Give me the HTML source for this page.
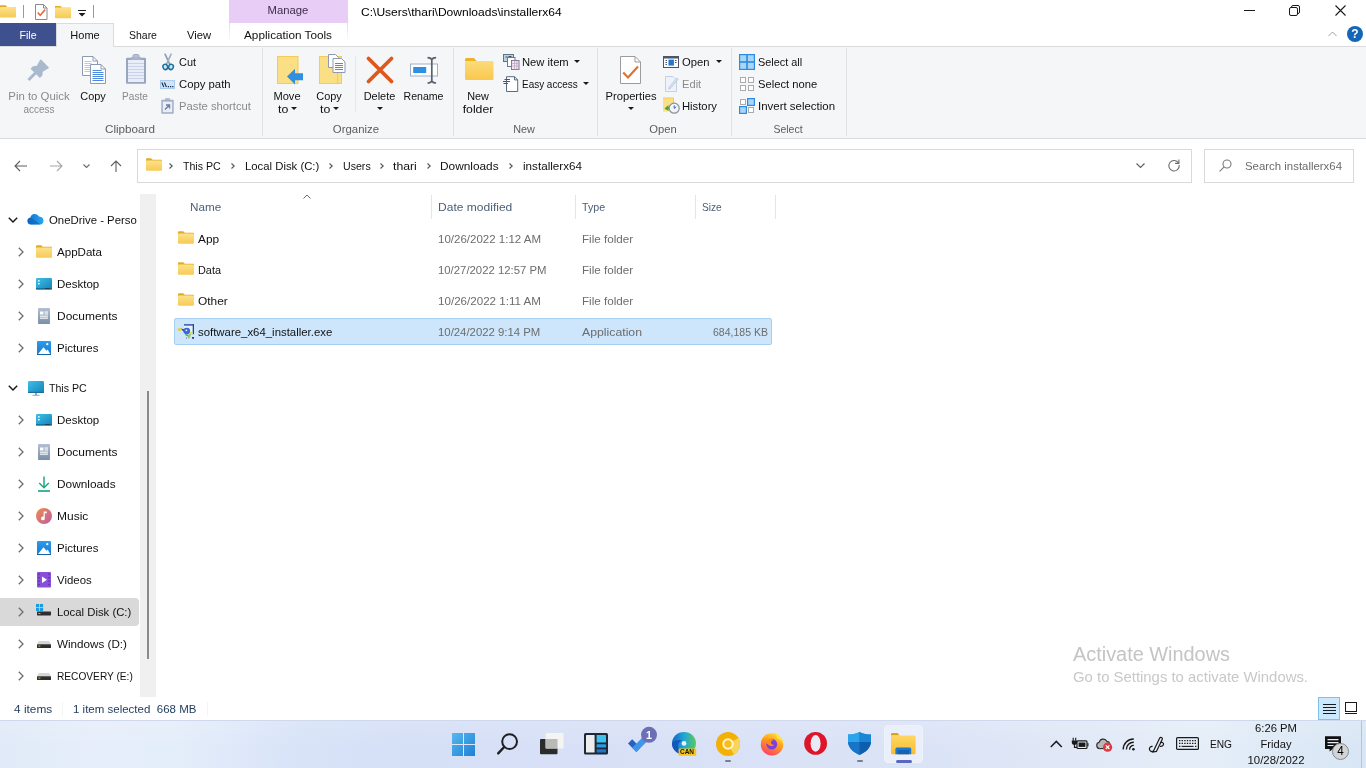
<!DOCTYPE html>
<html lang="en">
<head>
<meta charset="utf-8">
<title>installerx64</title>
<style>
*{box-sizing:border-box;margin:0;padding:0}
html,body{width:1366px;height:768px;overflow:hidden;background:#fff}
body{font-family:"Liberation Sans",sans-serif;font-size:11.75px;color:#111;position:relative}
.a{position:absolute;white-space:nowrap}
.t{position:absolute;white-space:nowrap;line-height:16px;height:16px}
.c{text-align:center}
.g{color:#5c5c5c}
.h{color:#4c607a}
.d{color:#6d6d6d}
.s{color:#1e395b}
.dis{color:#8a8a8a}
svg{position:absolute;overflow:visible}
/* title / tabs */
#manage{left:229px;top:0;width:119px;height:23px;background:#e8cdf7}
#filetab{left:0;top:23px;width:56px;height:23px;background:#3e508e}
#hometab{left:56px;top:23px;width:58px;height:24px;background:#f5f6f7;border:1px solid #dadbdc;border-bottom:none}
#apptab{left:229px;top:23px;width:119px;height:18px;background:linear-gradient(#ead4f5,#fff) left/1px 100% no-repeat,linear-gradient(#ead4f5,#fff) right/1px 100% no-repeat}
#ribbon{left:0;top:46px;width:1366px;height:93px;background:#f5f6f7;border-top:1px solid #dadbdc;border-bottom:1px solid #dadbdc}
.sep{position:absolute;top:48px;width:1px;height:88px;background:#e1e2e3}
/* address */
#addr{left:137px;top:149px;width:1055px;height:34px;border:1px solid #d9d9d9;background:#fff}
#search{left:1204px;top:149px;width:150px;height:34px;border:1px solid #d9d9d9;background:#fff}
/* nav */
#navsel{left:0;top:598px;width:139px;height:28px;background:#d9d9d9;border-radius:0 4px 4px 0}
#sbtrack{left:140px;top:194px;width:16px;height:503px;background:#f0f0f0}
#sbthumb{left:147px;top:391px;width:2px;height:268px;background:#8a8a8a}
/* list */
#rowsel{left:174px;top:318px;width:598px;height:27px;background:#cde6fb;border:1px solid #a6cff2;border-radius:2px}
.hsep{position:absolute;top:195px;width:1px;height:24px;background:#e5e5e5}
/* status + taskbar */
#taskbar{left:0;top:720px;width:1366px;height:48px;border-top:1px solid #cfd8ec;background:linear-gradient(rgba(255,255,255,0.12),rgba(255,255,255,0) 60%),linear-gradient(90deg,#e0eaf8 0%,#e6eefa 7%,#e4edfa 13%,#d8e3f8 22%,#d5dff6 30%,#d9e1f6 50%,#dbe3f6 68%,#e1e9f7 80%,#e5eef8 88%,#dde9f6 95%,#d8e6f5 100%)}
</style>
</head>
<body>
<div id="w" style="position:absolute;left:0;top:0;width:1366px;height:768px;will-change:transform">
<!-- TITLE BAR -->
<div class="a" id="manage"></div>
<div class="t c" style="left:229px;top:2px;width:118px;color:#3c2d48;transform:scaleX(0.9607);transform-origin:center center">Manage</div>
<div class="t" style="left:361px;top:4px;color:#000;transform:scaleX(1.0244);transform-origin:left center">C:\Users\thari\Downloads\installerx64</div>

<!-- TABS -->
<div class="a" id="ribbon"></div>
<div class="a" id="filetab"></div>
<div class="a" id="hometab"></div>
<div class="a" id="apptab"></div>
<div class="t c" style="left:0;top:27px;width:56px;color:#fff;transform:scaleX(0.9030);transform-origin:center center">File</div>
<div class="t c" style="left:56px;top:27px;width:58px;transform:scaleX(0.9380);transform-origin:center center">Home</div>
<div class="t c" style="left:114px;top:27px;width:58px;transform:scaleX(0.8897);transform-origin:center center">Share</div>
<div class="t c" style="left:172px;top:27px;width:54px;transform:scaleX(0.9539);transform-origin:center center">View</div>
<div class="t c" style="left:229px;top:27px;width:118px;transform:scaleX(1.0004);transform-origin:center center">Application Tools</div>

<!-- RIBBON -->
<div class="sep" style="left:262px"></div>
<div class="sep" style="left:453px"></div>
<div class="sep" style="left:597px"></div>
<div class="sep" style="left:731px"></div>
<div class="sep" style="left:846px"></div>


<!-- Quick access toolbar icons -->
<svg style="left:0;top:4px" width="17" height="14" viewBox="0 0 17 14"><defs><linearGradient id="fg" x1="0" y1="0" x2="0" y2="1"><stop offset="0" stop-color="#fde18c"/><stop offset="1" stop-color="#f7ca52"/></linearGradient></defs><path d="M0 1.2h5.5l1.8 1.8H16v1H0z" fill="#e2ad24"/><rect x="0" y="3" width="16" height="10.5" rx="0.8" fill="url(#fg)"/></svg>
<div class="a" style="left:23px;top:5px;width:1px;height:13px;background:#9a9a9a"></div>
<svg style="left:35px;top:4px" width="13" height="16" viewBox="0 0 13 16"><path d="M0.5 0.5h8l3.5 3.5v11.5h-11.5z" fill="#fff" stroke="#8a8a8a"/><path d="M8.5 0.5v3.5h3.5" fill="none" stroke="#8a8a8a"/><path d="M2.8 8.6l2.4 2.6l5-5.6" fill="none" stroke="#e2703a" stroke-width="1.6"/></svg>
<svg style="left:55px;top:5px" width="17" height="14" viewBox="0 0 17 14"><path d="M0 1h5.5l1.8 1.8H16v1H0z" fill="#e2ad24"/><rect x="0" y="2.6" width="16" height="10.6" rx="0.8" fill="url(#fg)"/></svg>
<div class="a" style="left:78px;top:10px;width:8px;height:1px;background:#1a1a1a"></div>
<svg style="left:78px;top:13px" width="8" height="4" viewBox="0 0 8 4"><path d="M0.5 0h7L4 3.6z" fill="#1a1a1a"/></svg>
<div class="a" style="left:93px;top:5px;width:1px;height:13px;background:#9a9a9a"></div>

<!-- window controls -->
<div class="a" style="left:1244px;top:10px;width:11px;height:1px;background:#1a1a1a"></div>
<svg style="left:1289px;top:5px" width="11" height="11" viewBox="0 0 11 11"><rect x="0.5" y="2.5" width="8" height="8" rx="1.5" fill="none" stroke="#1a1a1a"/><path d="M2.5 2.5v-0.5a1.5 1.5 0 0 1 1.5-1.5h5a1.5 1.5 0 0 1 1.5 1.5v5a1.5 1.5 0 0 1-1.5 1.5h-0.5" fill="none" stroke="#1a1a1a"/></svg>
<svg style="left:1335px;top:5px" width="11" height="11" viewBox="0 0 11 11"><path d="M0.5 0.5l10 10M10.5 0.5l-10 10" stroke="#1a1a1a" stroke-width="1.1" fill="none"/></svg>
<svg style="left:1328px;top:31px" width="9" height="6" viewBox="0 0 9 6"><path d="M0.5 5l4-4l4 4" fill="none" stroke="#a0a0a0" stroke-width="1"/></svg>
<div class="a" style="left:1347px;top:26px;width:16px;height:16px;border-radius:8px;background:#1566b7"></div>
<div class="t c" style="left:1347px;top:26px;width:16px;color:#fff;font-weight:bold;font-size:12px">?</div>


<!-- ribbon icons -->
<svg style="left:20px;top:52px" width="40" height="36" viewBox="20 52 40 36"><path transform="translate(44.750 63.750) rotate(45)" d="M-6 0.500a0.800 0.800 0 0 1 0.800-0.800h10.400a0.800 0.800 0 0 1 0.800 0.800L4.200 7L6.600 10v3.500h-5.100V23h-3V13.500h-5.100V10L-4.200 7z" fill="#a9b9ce"/></svg>
<svg style="left:82px;top:56px" width="24" height="28" viewBox="0 0 24 28"><path d="M0.500 0.500h10.500l4.500 4.500v14.500h-15z" fill="#fff" stroke="#8c9bb3"/><path d="M11 0.500v4.500h4.500" fill="none" stroke="#8c9bb3"/><path d="M2.500 5.500h7M2.500 7.500h7M2.500 9.500h5.500M2.500 11.500h5.500M2.500 13.500h5.500M2.500 15.500h5.500" stroke="#b3cbee" stroke-width="1"/><path d="M8.500 8.500h10.500l4.500 4.500v14.500h-15z" fill="#fff" stroke="#8c9bb3"/><path d="M19 8.500v4.500h4.500" fill="none" stroke="#8c9bb3"/><path d="M10.500 14.500h9M10.500 16.500h11M10.500 18.500h11M10.500 20.500h11M10.500 22.500h11M10.500 24.500h11" stroke="#4d8add" stroke-width="1.100"/></svg>
<svg style="left:126px;top:54px" width="20" height="30" viewBox="0 0 20 30"><rect x="7" y="0.500" width="6" height="5" rx="1.500" fill="#b9c1d4" stroke="#9aa5bf"/><rect x="0" y="3.800" width="20" height="26" rx="1" fill="#9aa5bf"/><rect x="2" y="6" width="16" height="22" fill="#e9edf8"/><path d="M2 9.500h16M2 12.500h16M2 15.500h16M2 18.500h16M2 21.500h16M2 24.500h16" stroke="#c9d2e8" stroke-width="1"/><rect x="5" y="3" width="10" height="3" fill="#aab3ca"/></svg>
<svg style="left:162px;top:53px" width="13" height="18" viewBox="162 53 13 18"><path d="M164 53.800l1.700-0.300L170.600 64l-1.600 0.800z" fill="#8e9db4"/><path d="M172.200 53.800l-1.700-0.300L165.600 64l1.600 0.800z" fill="#a3b0c4"/><ellipse cx="165.300" cy="66.900" rx="2.300" ry="2.700" transform="rotate(-20 165.300 66.900)" fill="#cfe6f3" stroke="#1b6f9e" stroke-width="1.500"/><ellipse cx="171" cy="66.900" rx="2.300" ry="2.700" transform="rotate(20 171 66.900)" fill="#cfe6f3" stroke="#1b6f9e" stroke-width="1.500"/></svg>
<svg style="left:160px;top:80px" width="15" height="9" viewBox="0 0 15 9"><rect x="0.500" y="0.500" width="14" height="8" fill="#cfe4f9" stroke="#a9cbee"/><path d="M1.800 2.500l2 4.500M4.400 2.500l2 4.500" stroke="#1c2c44" stroke-width="1.100"/><path d="M7.800 6.600h1.200M10 6.600h1.200M12.200 6.600h1.200" stroke="#1c2c44" stroke-width="1.200"/></svg>
<svg style="left:161px;top:98px" width="13" height="16" viewBox="0 0 13 16"><rect x="4" y="0" width="5" height="3" rx="1" fill="#b4bdd2"/><rect x="0.300" y="1.800" width="12.400" height="14" rx="0.800" fill="#a3aec6"/><rect x="1.800" y="3.600" width="9.400" height="10.600" fill="#e9edf8"/><path d="M4 11.500l4.200-4.200M5 7h3.500v3.500" fill="none" stroke="#6f7e9c" stroke-width="1.400"/></svg>

<svg style="left:277px;top:56px" width="27" height="29" viewBox="0 0 27 29"><rect x="0.500" y="0.500" width="20.500" height="27" fill="#fbdf85" stroke="#f1cb5c"/><path d="M10 20.500L18 12.800v4.400h8v7H18v4.400z" fill="#2f8fe2"/></svg>
<svg style="left:319px;top:54px" width="27" height="30" viewBox="0 0 27 30"><rect x="0.500" y="2.500" width="22" height="27" fill="#fbdf85" stroke="#f1cb5c"/><rect x="18" y="18" width="1.200" height="11.500" fill="#f1cb5c"/><path d="M9.500 0.500h7l3 3v10h-10z" fill="#fff" stroke="#8c9bb3"/><path d="M14 4.500h8.500l3.500 3.500v10.500h-12z" fill="#fff" stroke="#8c9bb3"/><path d="M16 9.500h8M16 11.500h8M16 13.500h8M16 15.500h8" stroke="#4d8add" stroke-width="1"/></svg>
<svg style="left:366px;top:56px" width="28" height="28" viewBox="0 0 28 28"><path d="M2.500 2.500L25.500 25.500M25.500 2.500L2.500 25.500" stroke="#de581c" stroke-width="3.800" stroke-linecap="round"/></svg>
<svg style="left:410px;top:57px" width="28" height="27" viewBox="0 0 28 27"><rect x="0.500" y="7" width="27" height="12" fill="#fff" stroke="#9fb0c8"/><rect x="3.200" y="10" width="13" height="6" fill="#2f8fe2"/><path d="M17.500 0.600c2.500 0 3.700 0.800 4.300 2c0.600-1.200 1.800-2 4.300-2M17.500 26c2.500 0 3.700-0.800 4.300-2c0.600 1.200 1.800 2 4.300 2M21.800 2.600v21.400" fill="none" stroke="#59636f" stroke-width="1.700"/></svg>

<svg style="left:465px;top:58px" width="29" height="22" viewBox="0 0 29 22"><path d="M0 1.500a1.500 1.500 0 0 1 1.500-1.500h7.500l2.600 3H0z" fill="#ecb322"/><rect x="0" y="3" width="28.500" height="19" rx="1.200" fill="url(#gnf)"/></svg>
<svg style="left:503px;top:54px" width="17" height="16" viewBox="503 54 17 16"><rect x="503.500" y="54.500" width="10" height="7" fill="#bcd2e4" stroke="#5f7389"/><path d="M505.500 57h2M508.500 56.500h3" stroke="#3f5268" stroke-width="1"/><rect x="507.500" y="57.500" width="7.500" height="9" fill="#fff" stroke="#6b7a90"/><rect x="511.500" y="60.500" width="7.500" height="9" fill="#f3e6f0" stroke="#7f7d9a"/><path d="M512 63.500h7M512 66h7M514.500 61v8.500M516.800 61v8.500" stroke="#c3a9c6" stroke-width="0.800"/></svg>
<svg style="left:503px;top:76px" width="16" height="16" viewBox="503 76 16 16"><path d="M506.500 76.700h8l3.200 3.200v11.600h-11.200z" fill="#fff" stroke="#5b6981"/><path d="M514.500 76.700v3.200h3.200" fill="none" stroke="#5b6981"/><path d="M504.500 79.500h5.500M503 81.500h7M503.500 83.500h4.500" stroke="#46587a" stroke-width="1"/></svg>

<svg style="left:620px;top:56px" width="21" height="28" viewBox="0 0 21 28"><path d="M0.500 0.500h14.500l5.500 5.500v21.500h-20z" fill="#fff" stroke="#9c9c9c"/><path d="M15 0.500v5.500h5.500" fill="none" stroke="#9c9c9c"/><path d="M3.200 16.600l4.800 4.900l10-11" fill="none" stroke="#e2702e" stroke-width="2.200"/></svg>
<svg style="left:663px;top:56px" width="16" height="12" viewBox="0 0 16 12"><rect x="0.500" y="0.500" width="15" height="11" fill="#fff" stroke="#4c5668"/><rect x="0.500" y="0.500" width="15" height="2" fill="#4c5668"/><rect x="5.500" y="3.600" width="5.400" height="6" fill="#1f79d2"/><path d="M2.500 4.500h1.500M2.500 6.500h1.500M2.500 8.500h1.500M12 4.500h1.500M12 6.500h1.500" stroke="#4c5668" stroke-width="1"/></svg>
<svg style="left:665px;top:76px" width="14" height="16" viewBox="0 0 14 16"><path d="M0.500 0.500h7.500l3.500 3.500v11.500h-11z" fill="#eef2fa" stroke="#c6d0e4"/><path d="M13.200 3.200L5.500 12.500l-1.800 0.600l0.400-1.900L11.800 2z" fill="#d9e1f0" stroke="#b9c5dc" stroke-width="0.800"/></svg>
<svg style="left:663px;top:98px" width="17" height="16" viewBox="0 0 17 16"><rect x="0" y="0" width="10.500" height="13.500" fill="#fbdf85"/><path d="M0 0h10.500v13.500" fill="none" stroke="#f1cb5c" stroke-width="1"/><path d="M1.500 10.500l4-3.500v2.200c2 0 3 1 3.500 2.500c-1-0.800-2-1-3.500-1v2.300z" fill="#3aa83a"/><circle cx="11.200" cy="10.200" r="5" fill="#f2f4f8" stroke="#8a8f98" stroke-width="1.200"/><path d="M11.200 7.400v3l2-1.600" fill="none" stroke="#3a5fc0" stroke-width="1"/></svg>

<svg style="left:739px;top:54px" width="16" height="16" viewBox="0 0 16 16"><rect x="0" y="0" width="16" height="16" fill="#2b8be0"/><rect x="1.200" y="1.200" width="6" height="6" fill="#a9d5f9"/><rect x="8.800" y="1.200" width="6" height="6" fill="#a9d5f9"/><rect x="1.200" y="8.800" width="6" height="6" fill="#a9d5f9"/><rect x="8.800" y="8.800" width="6" height="6" fill="#a9d5f9"/></svg>
<svg style="left:740px;top:77px" width="14" height="14" viewBox="0 0 14 14"><g fill="#fff" stroke="#ababab" stroke-width="1"><rect x="0.500" y="0.500" width="5" height="5"/><rect x="8.500" y="0.500" width="5" height="5"/><rect x="0.500" y="8.500" width="5" height="5"/><rect x="8.500" y="8.500" width="5" height="5"/></g></svg>
<svg style="left:739px;top:98px" width="16" height="16" viewBox="0 0 16 16"><rect x="1.500" y="1.500" width="5" height="5" fill="#fff" stroke="#ababab"/><rect x="9.500" y="9.500" width="5" height="5" fill="#fff" stroke="#ababab"/><rect x="8" y="0" width="8" height="8" fill="#2b8be0"/><rect x="9.200" y="1.200" width="5.600" height="5.600" fill="#a9d5f9"/><rect x="0" y="8" width="8" height="8" fill="#2b8be0"/><rect x="1.200" y="9.200" width="5.600" height="5.600" fill="#a9d5f9"/></svg>

<!-- Clipboard group -->
<div class="t c dis" style="left:0;top:88px;width:78px;transform:scaleX(0.9691);transform-origin:center center">Pin to Quick</div>
<div class="t c dis" style="left:0;top:101px;width:78px;transform:scaleX(0.8448);transform-origin:center center">access</div>
<div class="t c" style="left:73px;top:88px;width:40px;transform:scaleX(0.9294);transform-origin:center center">Copy</div>
<div class="t c dis" style="left:115px;top:88px;width:40px;transform:scaleX(0.8587);transform-origin:center center">Paste</div>
<div class="t" style="left:179px;top:54px;transform:scaleX(0.9291);transform-origin:left center">Cut</div>
<div class="t" style="left:179px;top:76px;transform:scaleX(0.9631);transform-origin:left center">Copy path</div>
<div class="t dis" style="left:179px;top:98px;transform:scaleX(0.9586);transform-origin:left center">Paste shortcut</div>
<div class="t c g" style="left:90px;top:121px;width:80px;transform:scaleX(0.9941);transform-origin:center center">Clipboard</div>

<!-- Organize group -->
<div class="t c" style="left:267px;top:88px;width:40px;transform:scaleX(0.9466);transform-origin:center center">Move</div>
<div class="t" style="left:278px;top:101px;transform:scaleX(1.0497);transform-origin:left center">to</div>
<div class="t c" style="left:309px;top:88px;width:40px;transform:scaleX(0.9294);transform-origin:center center">Copy</div>
<div class="t" style="left:320px;top:101px;transform:scaleX(1.0497);transform-origin:left center">to</div>
<div class="a" style="left:355px;top:56px;width:1px;height:56px;background:#e6e7e8"></div>
<div class="t c" style="left:359px;top:88px;width:41px;transform:scaleX(0.9303);transform-origin:center center">Delete</div>
<div class="t c" style="left:401px;top:88px;width:45px;transform:scaleX(0.9005);transform-origin:center center">Rename</div>
<div class="t c g" style="left:316px;top:121px;width:80px;transform:scaleX(0.9730);transform-origin:center center">Organize</div>

<!-- New group -->
<div class="t c" style="left:458px;top:88px;width:40px;transform:scaleX(0.9228);transform-origin:center center">New</div>
<div class="t c" style="left:458px;top:101px;width:40px;transform:scaleX(1.0440);transform-origin:center center">folder</div>
<div class="t" style="left:522px;top:54px;transform:scaleX(0.9537);transform-origin:left center">New item</div>
<div class="t" style="left:522px;top:76px;transform:scaleX(0.8459);transform-origin:left center">Easy access</div>
<div class="t c g" style="left:484px;top:121px;width:80px;transform:scaleX(0.9228);transform-origin:center center">New</div>

<!-- Open group -->
<div class="t c" style="left:600px;top:88px;width:62px;transform:scaleX(0.9522);transform-origin:center center">Properties</div>
<div class="t" style="left:682px;top:54px;transform:scaleX(0.9565);transform-origin:left center">Open</div>
<div class="t dis" style="left:682px;top:76px;transform:scaleX(0.9481);transform-origin:left center">Edit</div>
<div class="t" style="left:682px;top:98px;transform:scaleX(0.9573);transform-origin:left center">History</div>
<div class="t c g" style="left:623px;top:121px;width:80px;transform:scaleX(0.9565);transform-origin:center center">Open</div>

<!-- Select group -->
<div class="t" style="left:758px;top:54px;transform:scaleX(0.9269);transform-origin:left center">Select all</div>
<div class="t" style="left:758px;top:76px;transform:scaleX(0.9539);transform-origin:left center">Select none</div>
<div class="t" style="left:758px;top:98px;transform:scaleX(0.9743);transform-origin:left center">Invert selection</div>
<div class="t c g" style="left:748px;top:121px;width:80px;transform:scaleX(0.8937);transform-origin:center center">Select</div>

<!-- dropdown arrows -->
<svg class="arr" style="left:291px;top:107px" width="6" height="3" viewBox="0 0 6 3"><path d="M0 0h6L3 3z" fill="#1a1a1a"/></svg>
<svg class="arr" style="left:333px;top:107px" width="6" height="3" viewBox="0 0 6 3"><path d="M0 0h6L3 3z" fill="#1a1a1a"/></svg>
<svg class="arr" style="left:377px;top:107px" width="6" height="3" viewBox="0 0 6 3"><path d="M0 0h6L3 3z" fill="#1a1a1a"/></svg>
<svg class="arr" style="left:628px;top:107px" width="6" height="3" viewBox="0 0 6 3"><path d="M0 0h6L3 3z" fill="#1a1a1a"/></svg>
<svg class="arr" style="left:574px;top:60px" width="6" height="3" viewBox="0 0 6 3"><path d="M0 0h6L3 3z" fill="#1a1a1a"/></svg>
<svg class="arr" style="left:583px;top:82px" width="6" height="3" viewBox="0 0 6 3"><path d="M0 0h6L3 3z" fill="#1a1a1a"/></svg>
<svg class="arr" style="left:716px;top:60px" width="6" height="3" viewBox="0 0 6 3"><path d="M0 0h6L3 3z" fill="#1a1a1a"/></svg>

<!-- ADDRESS BAR -->
<div class="a" id="addr"></div>
<div class="a" id="search"></div>


<!-- nav arrows -->
<svg style="left:14px;top:160px" width="14" height="12" viewBox="0 0 14 12"><path d="M13 6H1M6 1L1 6l5 5" fill="none" stroke="#5f5f5f" stroke-width="1.1"/></svg>
<svg style="left:49px;top:160px" width="14" height="12" viewBox="0 0 14 12"><path d="M1 6h12M8 1l5 5l-5 5" fill="none" stroke="#a6a6a6" stroke-width="1.1"/></svg>
<svg style="left:83px;top:164px" width="7" height="4" viewBox="0 0 7 4"><path d="M0.5 0.5l3 3l3-3" fill="none" stroke="#6a6a6a" stroke-width="1.1"/></svg>
<svg style="left:110px;top:160px" width="12" height="12" viewBox="0 0 12 12"><path d="M6 12V1M1 6l5-5l5 5" fill="none" stroke="#5f5f5f" stroke-width="1.1"/></svg>
<svg style="left:146px;top:158px" width="16" height="13" viewBox="0 0 16 13"><path d="M0 1.2a1 1 0 0 1 1-1h4l1.6 1.6H15a1 1 0 0 1 1 1V4H0z" fill="#e2ad24"/><rect x="0" y="2.6" width="16" height="10.2" rx="1" fill="url(#fg)"/></svg>
<div class="t" style="left:183px;top:158px;transform:scaleX(0.9020);transform-origin:left center">This PC</div>
<div class="t" style="left:245px;top:158px;transform:scaleX(0.9643);transform-origin:left center">Local Disk (C:)</div>
<div class="t" style="left:343px;top:158px;transform:scaleX(0.9026);transform-origin:left center">Users</div>
<div class="t" style="left:393px;top:158px;transform:scaleX(1.0411);transform-origin:left center">thari</div>
<div class="t" style="left:440px;top:158px;transform:scaleX(1.0079);transform-origin:left center">Downloads</div>
<div class="t" style="left:523px;top:158px;transform:scaleX(0.9926);transform-origin:left center">installerx64</div>
<svg class="chv" style="left:169px;top:163px" width="4" height="6" viewBox="0 0 4 6"><path d="M0.5 0.5L3.2 3L0.5 5.5" fill="none" stroke="#555" stroke-width="1.1"/></svg>
<svg class="chv" style="left:231px;top:163px" width="4" height="6" viewBox="0 0 4 6"><path d="M0.5 0.5L3.2 3L0.5 5.5" fill="none" stroke="#555" stroke-width="1.1"/></svg>
<svg class="chv" style="left:329px;top:163px" width="4" height="6" viewBox="0 0 4 6"><path d="M0.5 0.5L3.2 3L0.5 5.5" fill="none" stroke="#555" stroke-width="1.1"/></svg>
<svg class="chv" style="left:380px;top:163px" width="4" height="6" viewBox="0 0 4 6"><path d="M0.5 0.5L3.2 3L0.5 5.5" fill="none" stroke="#555" stroke-width="1.1"/></svg>
<svg class="chv" style="left:427px;top:163px" width="4" height="6" viewBox="0 0 4 6"><path d="M0.5 0.5L3.2 3L0.5 5.5" fill="none" stroke="#555" stroke-width="1.1"/></svg>
<svg class="chv" style="left:509px;top:163px" width="4" height="6" viewBox="0 0 4 6"><path d="M0.5 0.5L3.2 3L0.5 5.5" fill="none" stroke="#555" stroke-width="1.1"/></svg>
<svg style="left:1136px;top:163px" width="9" height="5" viewBox="0 0 9 5"><path d="M0.5 0.5l4 4l4-4" fill="none" stroke="#5f5f5f" stroke-width="1.1"/></svg>
<svg style="left:1168px;top:159px" width="12" height="12" viewBox="0 0 12 12"><path d="M10.6 4.2A5.2 5.2 0 1 0 11.2 6" fill="none" stroke="#6a6a6a" stroke-width="1.1"/><path d="M10.9 0.6v3.8h-3.8" fill="none" stroke="#6a6a6a" stroke-width="1.1"/></svg>
<svg style="left:1219px;top:159px" width="13" height="13" viewBox="0 0 13 13"><circle cx="8" cy="5" r="4" fill="none" stroke="#7a7a7a" stroke-width="1.1"/><path d="M5.2 7.8L0.6 12.4" stroke="#7a7a7a" stroke-width="1.1"/></svg>
<div class="t g" style="left:1245px;top:158px;color:#6a6a6a;transform:scaleX(0.9706);transform-origin:left center">Search installerx64</div>

<!-- NAV PANE -->
<div class="a" id="sbtrack"></div>
<div class="a" id="sbthumb"></div>
<div class="a" id="navsel"></div>

<svg width="0" height="0" style="left:0;top:0"><defs>
<linearGradient id="gdesk" x1="0" y1="0" x2="1" y2="1"><stop offset="0" stop-color="#3cc0ea"/><stop offset="1" stop-color="#1682b8"/></linearGradient>
<linearGradient id="gdoc" x1="0" y1="0" x2="0" y2="1"><stop offset="0" stop-color="#b3c0d3"/><stop offset="1" stop-color="#7a8ea9"/></linearGradient>
<linearGradient id="gpic" x1="0" y1="0" x2="0" y2="1"><stop offset="0" stop-color="#2a9cee"/><stop offset="1" stop-color="#1a78cf"/></linearGradient>
<linearGradient id="gmus" x1="0" y1="0" x2="1" y2="1"><stop offset="0" stop-color="#f08c4a"/><stop offset="1" stop-color="#bd5ca6"/></linearGradient>
<linearGradient id="gcloud" x1="0" y1="0" x2="1" y2="0"><stop offset="0" stop-color="#0f6fd0"/><stop offset="1" stop-color="#2aa6ec"/></linearGradient>
<linearGradient id="gdrv" x1="0" y1="0" x2="0" y2="1"><stop offset="0" stop-color="#dcdcdc"/><stop offset="0.45" stop-color="#9a9a9a"/><stop offset="0.5" stop-color="#3a3a3a"/><stop offset="1" stop-color="#2a2a2a"/></linearGradient>
</defs></svg>
<svg style="left:8px;top:217px" width="10" height="6" viewBox="0 0 10 6"><path d="M0.8 0.8L5 5L9.2 0.8" fill="none" stroke="#1a1a1a" stroke-width="1.5"/></svg>
<svg style="left:27px;top:214px" width="17" height="11" viewBox="0 0 17 11"><path d="M4 10.5a3.5 3.5 0 0 1-0.6-6.95A4.6 4.6 0 0 1 12 2.6a3.1 3.1 0 0 1 1.2 0.2A3.9 3.9 0 0 1 13.2 10.5z" fill="url(#gcloud)"/><path d="M4 10.5a3.5 3.5 0 0 1-1.2-6.8c2 0.2 6 2.8 10.4 6.8z" fill="#0b5cb8" opacity="0.55"/></svg>
<div class="t" style="left:49px;top:212px;transform:scaleX(0.9673);transform-origin:left center">OneDrive - Perso</div>
<svg style="left:18px;top:247px" width="6" height="10" viewBox="0 0 6 10"><path d="M0.8 0.8L5 5L0.8 9.2" fill="none" stroke="#6e6e6e" stroke-width="1.3"/></svg>
<svg style="left:36px;top:245px" width="16" height="13" viewBox="0 0 16 13"><path d="M0 1.2a1 1 0 0 1 1-1h4.2l1.6 1.6H15a1 1 0 0 1 1 1V4H0z" fill="#e2ad24"/><rect x="0" y="2.6" width="16" height="10.2" rx="1" fill="url(#fg)"/></svg>
<div class="t" style="left:57px;top:244px;transform:scaleX(0.9839);transform-origin:left center">AppData</div>
<svg style="left:18px;top:279px" width="6" height="10" viewBox="0 0 6 10"><path d="M0.8 0.8L5 5L0.8 9.2" fill="none" stroke="#6e6e6e" stroke-width="1.3"/></svg>
<svg style="left:36px;top:278px" width="16" height="12" viewBox="0 0 16 12"><rect x="0" y="0" width="16" height="11.5" rx="1.2" fill="url(#gdesk)"/><rect x="2" y="2.2" width="1.6" height="1.4" fill="#fff"/><rect x="2" y="5" width="1.6" height="1.4" fill="#fff"/><rect x="0" y="10" width="16" height="1.5" fill="#13709f"/><rect x="9" y="10" width="5" height="1" fill="#2b3d4a"/></svg>
<div class="t" style="left:57px;top:276px;transform:scaleX(0.9789);transform-origin:left center">Desktop</div>
<svg style="left:18px;top:311px" width="6" height="10" viewBox="0 0 6 10"><path d="M0.8 0.8L5 5L0.8 9.2" fill="none" stroke="#6e6e6e" stroke-width="1.3"/></svg>
<svg style="left:38px;top:308px" width="12" height="16" viewBox="0 0 12 16"><rect x="0" y="0" width="12" height="16" rx="0.8" fill="url(#gdoc)"/><rect x="2" y="3.5" width="3.5" height="3" fill="#fff"/><rect x="6.5" y="3.5" width="3.5" height="1.1" fill="#fff"/><rect x="6.5" y="5.4" width="3.5" height="1.1" fill="#fff"/><rect x="2" y="7.6" width="8" height="1.1" fill="#fff"/><rect x="2" y="9.6" width="8" height="1.1" fill="#fff"/></svg>
<div class="t" style="left:57px;top:308px;transform:scaleX(1.0179);transform-origin:left center">Documents</div>
<svg style="left:18px;top:343px" width="6" height="10" viewBox="0 0 6 10"><path d="M0.8 0.8L5 5L0.8 9.2" fill="none" stroke="#6e6e6e" stroke-width="1.3"/></svg>
<svg style="left:37px;top:341px" width="14" height="14" viewBox="0 0 14 14"><rect x="0" y="0" width="14" height="14" rx="1" fill="url(#gpic)"/><path d="M0.8 13.2L6.5 6.2l3 3.6l1.2-1.2l2.6 4.6z" fill="#fff"/><circle cx="10.3" cy="3.2" r="1.1" fill="#fff"/><rect x="0" y="13" width="14" height="1" fill="#1560a8"/></svg>
<div class="t" style="left:57px;top:340px;transform:scaleX(0.9775);transform-origin:left center">Pictures</div>
<svg style="left:8px;top:385px" width="10" height="6" viewBox="0 0 10 6"><path d="M0.8 0.8L5 5L9.2 0.8" fill="none" stroke="#1a1a1a" stroke-width="1.5"/></svg>
<svg style="left:28px;top:381px" width="16" height="15" viewBox="0 0 16 15"><rect x="0" y="0" width="16" height="12" rx="1.2" fill="url(#gdesk)"/><rect x="0" y="10.8" width="16" height="1.2" fill="#13709f"/><rect x="7" y="12" width="2" height="2" fill="#8aa4b4"/><rect x="4.5" y="13.8" width="7" height="1" fill="#8aa4b4"/></svg>
<div class="t" style="left:49px;top:380px;transform:scaleX(0.9020);transform-origin:left center">This PC</div>
<svg style="left:18px;top:415px" width="6" height="10" viewBox="0 0 6 10"><path d="M0.8 0.8L5 5L0.8 9.2" fill="none" stroke="#6e6e6e" stroke-width="1.3"/></svg>
<svg style="left:36px;top:414px" width="16" height="12" viewBox="0 0 16 12"><rect x="0" y="0" width="16" height="11.5" rx="1.2" fill="url(#gdesk)"/><rect x="2" y="2.2" width="1.6" height="1.4" fill="#fff"/><rect x="2" y="5" width="1.6" height="1.4" fill="#fff"/><rect x="0" y="10" width="16" height="1.5" fill="#13709f"/><rect x="9" y="10" width="5" height="1" fill="#2b3d4a"/></svg>
<div class="t" style="left:57px;top:412px;transform:scaleX(0.9789);transform-origin:left center">Desktop</div>
<svg style="left:18px;top:447px" width="6" height="10" viewBox="0 0 6 10"><path d="M0.8 0.8L5 5L0.8 9.2" fill="none" stroke="#6e6e6e" stroke-width="1.3"/></svg>
<svg style="left:38px;top:444px" width="12" height="16" viewBox="0 0 12 16"><rect x="0" y="0" width="12" height="16" rx="0.8" fill="url(#gdoc)"/><rect x="2" y="3.5" width="3.5" height="3" fill="#fff"/><rect x="6.5" y="3.5" width="3.5" height="1.1" fill="#fff"/><rect x="6.5" y="5.4" width="3.5" height="1.1" fill="#fff"/><rect x="2" y="7.6" width="8" height="1.1" fill="#fff"/><rect x="2" y="9.6" width="8" height="1.1" fill="#fff"/></svg>
<div class="t" style="left:57px;top:444px;transform:scaleX(1.0179);transform-origin:left center">Documents</div>
<svg style="left:18px;top:479px" width="6" height="10" viewBox="0 0 6 10"><path d="M0.8 0.8L5 5L0.8 9.2" fill="none" stroke="#6e6e6e" stroke-width="1.3"/></svg>
<svg style="left:38px;top:476px" width="12" height="16" viewBox="0 0 12 16"><path d="M6 0.5v11M1.2 7l4.8 4.8L10.8 7" fill="none" stroke="#1aab86" stroke-width="1.5"/><rect x="0" y="14.2" width="12" height="1.6" fill="#17a07c"/></svg>
<div class="t" style="left:57px;top:476px;transform:scaleX(1.0079);transform-origin:left center">Downloads</div>
<svg style="left:18px;top:511px" width="6" height="10" viewBox="0 0 6 10"><path d="M0.8 0.8L5 5L0.8 9.2" fill="none" stroke="#6e6e6e" stroke-width="1.3"/></svg>
<svg style="left:36px;top:508px" width="16" height="16" viewBox="0 0 16 16"><circle cx="8" cy="8" r="8" fill="url(#gmus)"/><path d="M7.6 3.6h3.2v1.6H8.8v5.2a1.9 1.9 0 1 1-1.2-1.8z" fill="#fff"/></svg>
<div class="t" style="left:57px;top:508px;transform:scaleX(1.0200);transform-origin:left center">Music</div>
<svg style="left:18px;top:543px" width="6" height="10" viewBox="0 0 6 10"><path d="M0.8 0.8L5 5L0.8 9.2" fill="none" stroke="#6e6e6e" stroke-width="1.3"/></svg>
<svg style="left:37px;top:541px" width="14" height="14" viewBox="0 0 14 14"><rect x="0" y="0" width="14" height="14" rx="1" fill="url(#gpic)"/><path d="M0.8 13.2L6.5 6.2l3 3.6l1.2-1.2l2.6 4.6z" fill="#fff"/><circle cx="10.3" cy="3.2" r="1.1" fill="#fff"/><rect x="0" y="13" width="14" height="1" fill="#1560a8"/></svg>
<div class="t" style="left:57px;top:540px;transform:scaleX(0.9775);transform-origin:left center">Pictures</div>
<svg style="left:18px;top:575px" width="6" height="10" viewBox="0 0 6 10"><path d="M0.8 0.8L5 5L0.8 9.2" fill="none" stroke="#6e6e6e" stroke-width="1.3"/></svg>
<svg style="left:37px;top:572px" width="14" height="16" viewBox="0 0 14 16"><rect x="0" y="0" width="14" height="15.5" rx="1" fill="#8a4fd8"/><path d="M5 4.6v6.4l5-3.2z" fill="#fff"/><g fill="#5a2aa8"><rect x="1.2" y="1.6" width="1.4" height="1.4"/><rect x="1.2" y="5" width="1.4" height="1.4"/><rect x="1.2" y="8.4" width="1.4" height="1.4"/><rect x="1.2" y="11.8" width="1.4" height="1.4"/><rect x="11.4" y="1.6" width="1.4" height="1.4"/><rect x="11.4" y="5" width="1.4" height="1.4"/><rect x="11.4" y="8.4" width="1.4" height="1.4"/><rect x="11.4" y="11.8" width="1.4" height="1.4"/></g></svg>
<div class="t" style="left:57px;top:572px;transform:scaleX(0.9715);transform-origin:left center">Videos</div>
<svg style="left:18px;top:607px" width="6" height="10" viewBox="0 0 6 10"><path d="M0.8 0.8L5 5L0.8 9.2" fill="none" stroke="#6e6e6e" stroke-width="1.3"/></svg>
<svg style="left:36px;top:604px" width="15" height="12" viewBox="0 0 15 12"><g fill="#1e9be0"><rect x="0" y="0" width="3.2" height="3.2"/><rect x="3.9" y="0" width="3.2" height="3.2"/><rect x="0" y="3.9" width="3.2" height="3.2"/><rect x="3.9" y="3.9" width="3.2" height="3.2"/></g><rect x="1" y="7.6" width="14" height="3.8" rx="0.6" fill="#2f2f2f"/><rect x="2.4" y="9" width="2" height="1" fill="#9ad06a"/></svg>
<div class="t" style="left:57px;top:604px;transform:scaleX(0.9643);transform-origin:left center">Local Disk (C:)</div>
<svg style="left:18px;top:639px" width="6" height="10" viewBox="0 0 6 10"><path d="M0.8 0.8L5 5L0.8 9.2" fill="none" stroke="#6e6e6e" stroke-width="1.3"/></svg>
<svg style="left:37px;top:641px" width="14" height="7" viewBox="0 0 14 7"><path d="M2 0h10l2 3.2H0z" fill="#d6d6d6"/><rect x="0" y="3.2" width="14" height="3.8" rx="0.6" fill="#2f2f2f"/><rect x="1.4" y="4.6" width="2" height="1" fill="#9ad06a"/></svg>
<div class="t" style="left:57px;top:636px;transform:scaleX(0.9927);transform-origin:left center">Windows (D:)</div>
<svg style="left:18px;top:671px" width="6" height="10" viewBox="0 0 6 10"><path d="M0.8 0.8L5 5L0.8 9.2" fill="none" stroke="#6e6e6e" stroke-width="1.3"/></svg>
<svg style="left:37px;top:673px" width="14" height="7" viewBox="0 0 14 7"><path d="M2 0h10l2 3.2H0z" fill="#d6d6d6"/><rect x="0" y="3.2" width="14" height="3.8" rx="0.6" fill="#2f2f2f"/><rect x="1.4" y="4.6" width="2" height="1" fill="#9ad06a"/></svg>
<div class="t" style="left:57px;top:668px;transform:scaleX(0.8641);transform-origin:left center">RECOVERY (E:)</div>


<!-- FILE LIST -->
<div class="a" id="rowsel"></div>


<div class="hsep" style="left:431px"></div>
<div class="hsep" style="left:575px"></div>
<div class="hsep" style="left:695px"></div>
<div class="hsep" style="left:775px"></div>
<svg style="left:303px;top:194px" width="8" height="5" viewBox="0 0 8 5"><path d="M0.5 4.5L4 1l3.5 3.5" fill="none" stroke="#6a6a6a" stroke-width="1"/></svg>
<div class="t h" style="left:190px;top:199px;transform:scaleX(0.9954);transform-origin:left center">Name</div>
<div class="t h" style="left:438px;top:199px;transform:scaleX(1.0248);transform-origin:left center">Date modified</div>
<div class="t h" style="left:582px;top:199px;transform:scaleX(0.9064);transform-origin:left center">Type</div>
<div class="t h" style="left:702px;top:199px;transform:scaleX(0.8618);transform-origin:left center">Size</div>
<svg style="left:178px;top:231px" width="16" height="13" viewBox="0 0 16 13"><path d="M0 1.2a1 1 0 0 1 1-1h4.2l1.6 1.6H15a1 1 0 0 1 1 1V4H0z" fill="#e2ad24"/><rect x="0" y="2.6" width="16" height="10.2" rx="1" fill="url(#fg)"/></svg>
<div class="t" style="left:198px;top:231px;transform:scaleX(1.0085);transform-origin:left center">App</div>
<div class="t d" style="left:438px;top:231px;transform:scaleX(0.9792);transform-origin:left center">10/26/2022 1:12 AM</div>
<div class="t d" style="left:582px;top:231px;transform:scaleX(0.9924);transform-origin:left center">File folder</div>
<svg style="left:178px;top:262px" width="16" height="13" viewBox="0 0 16 13"><path d="M0 1.2a1 1 0 0 1 1-1h4.2l1.6 1.6H15a1 1 0 0 1 1 1V4H0z" fill="#e2ad24"/><rect x="0" y="2.6" width="16" height="10.2" rx="1" fill="url(#fg)"/></svg>
<div class="t" style="left:198px;top:262px;transform:scaleX(0.9264);transform-origin:left center">Data</div>
<div class="t d" style="left:438px;top:262px;transform:scaleX(0.9655);transform-origin:left center">10/27/2022 12:57 PM</div>
<div class="t d" style="left:582px;top:262px;transform:scaleX(0.9924);transform-origin:left center">File folder</div>
<svg style="left:178px;top:293px" width="16" height="13" viewBox="0 0 16 13"><path d="M0 1.2a1 1 0 0 1 1-1h4.2l1.6 1.6H15a1 1 0 0 1 1 1V4H0z" fill="#e2ad24"/><rect x="0" y="2.6" width="16" height="10.2" rx="1" fill="url(#fg)"/></svg>
<div class="t" style="left:198px;top:293px;transform:scaleX(1.0139);transform-origin:left center">Other</div>
<div class="t d" style="left:438px;top:293px;transform:scaleX(0.9874);transform-origin:left center">10/26/2022 1:11 AM</div>
<div class="t d" style="left:582px;top:293px;transform:scaleX(0.9924);transform-origin:left center">File folder</div>
<svg style="left:177px;top:323px" width="18" height="17" viewBox="177 323 18 17"><rect x="184" y="325" width="9.400" height="9" fill="#e6f1fb"/><rect x="184" y="324.200" width="10" height="1.400" fill="#2a4fa2"/><rect x="192.700" y="324.200" width="1.300" height="10" fill="#25468f"/><path d="M180.500 328.600l4 0.600v3.400z" fill="#3a3fa8"/><circle cx="186.800" cy="331" r="3.300" fill="#3a66da"/><circle cx="186.400" cy="330.300" r="0.900" fill="#e8f2ff"/><ellipse cx="179.500" cy="329.500" rx="1.900" ry="1.500" fill="#e4d431"/><ellipse cx="191.200" cy="333.200" rx="1.400" ry="1.400" fill="#e6de3c"/><path d="M185 333.800l3.200 1.200l2.400-1l-0.600 2.200l-4 -0.400z" fill="#3f9a6a"/><ellipse cx="188.900" cy="336.500" rx="1.300" ry="2.100" fill="#9dcd4a"/><rect x="192" y="337" width="2" height="1.800" fill="#2b3f90"/><rect x="186" y="337.400" width="1" height="1.400" fill="#7d8fc8"/></svg>
<div class="t" style="left:198px;top:324px;transform:scaleX(0.9698);transform-origin:left center">software_x64_installer.exe</div>
<div class="t d" style="left:438px;top:324px;transform:scaleX(0.9665);transform-origin:left center">10/24/2022 9:14 PM</div>
<div class="t d" style="left:582px;top:324px;transform:scaleX(1.0438);transform-origin:left center">Application</div>
<div class="t d" style="left:668px;top:324px;width:100px;text-align:right;transform:scaleX(0.8954);transform-origin:right center">684,185 KB</div>

<!-- STATUS BAR -->

<div class="t s" style="left:14px;top:701px;transform:scaleX(1.0086);transform-origin:left center">4 items</div>
<div class="t s" style="left:73px;top:701px;white-space:pre;transform:scaleX(0.9789);transform-origin:left center">1 item selected  668 MB</div>
<div class="a" style="left:62px;top:702px;width:1px;height:14px;background:#f4f4f4"></div>
<div class="a" style="left:207px;top:702px;width:1px;height:14px;background:#f4f4f4"></div>
<div class="a" style="left:1318px;top:697px;width:22px;height:23px;background:#cce8ff;border:1px solid #7cc0ee"></div>
<div class="a" style="left:1323px;top:704px;width:13px;height:1px;background:#1a1a1a;box-shadow:0 3px 0 #1a1a1a,0 6px 0 #1a1a1a,0 9px 0 #1a1a1a"></div>
<div class="a" style="left:1345px;top:702px;width:12px;height:10px;border:1px solid #1a1a1a"></div>
<div class="a" style="left:1345px;top:713px;width:12px;height:1px;background:#1a1a1a"></div>
<div class="t" style="left:1073px;top:642px;font-size:20px;line-height:24px;height:24px;color:#c4c4c4;transform:scaleX(0.9947);transform-origin:left center">Activate Windows</div>
<div class="t" style="left:1073px;top:668px;font-size:14.6px;line-height:18px;height:18px;color:#c8c8c8;transform:scaleX(1.0201);transform-origin:left center">Go to Settings to activate Windows.</div>


<!-- TASKBAR -->
<div class="a" id="taskbar"></div>

<svg width="0" height="0" style="left:0;top:0"><defs>
<linearGradient id="gwin" x1="0" y1="0" x2="1" y2="1"><stop offset="0" stop-color="#55b8ee"/><stop offset="1" stop-color="#1f80d4"/></linearGradient>
<linearGradient id="gedge" x1="0" y1="0" x2="1" y2="0"><stop offset="0" stop-color="#1565c8"/><stop offset="0.5" stop-color="#1fa6d8"/><stop offset="1" stop-color="#5cc95a"/></linearGradient>
<linearGradient id="gff" x1="0.8" y1="0" x2="0.3" y2="1"><stop offset="0" stop-color="#ffe43a"/><stop offset="0.45" stop-color="#ff9a1c"/><stop offset="1" stop-color="#ff3d6a"/></linearGradient>
<linearGradient id="gnf" x1="0" y1="0" x2="0" y2="1"><stop offset="0" stop-color="#fcdb7a"/><stop offset="1" stop-color="#f9c84c"/></linearGradient>
<linearGradient id="gfold" x1="0" y1="0" x2="0" y2="1"><stop offset="0" stop-color="#fdd766"/><stop offset="1" stop-color="#f8bc2e"/></linearGradient>
</defs></svg>
<!-- start -->
<svg style="left:452px;top:733px" width="23" height="23" viewBox="0 0 23 23"><rect x="0" y="0" width="23" height="23" fill="url(#gwin)"/><rect x="11" y="0" width="1" height="23" fill="#dde5f6"/><rect x="0" y="11" width="23" height="1" fill="#dde5f6"/></svg>
<!-- search -->
<svg style="left:497px;top:733px" width="22" height="22" viewBox="0 0 22 22"><circle cx="12.6" cy="8.6" r="7.4" fill="none" stroke="#1f1f24" stroke-width="2"/><path d="M7.2 14L1.2 20.4" stroke="#1f1f24" stroke-width="2.4" stroke-linecap="round"/></svg>
<!-- task view -->
<svg style="left:540px;top:733px" width="24" height="22" viewBox="0 0 24 22"><rect x="0" y="6" width="17.5" height="15.2" rx="1" fill="#2b2b2b"/><rect x="5.6" y="0" width="18" height="15.5" rx="1" fill="#f4f4f2"/><rect x="5.6" y="6" width="11.9" height="9.5" fill="#b9b9b7"/></svg>
<!-- widgets -->
<svg style="left:584px;top:733px" width="24" height="22" viewBox="0 0 24 22"><rect x="0" y="0" width="24" height="21.6" rx="1.6" fill="#1d2735"/><rect x="2" y="2" width="8.6" height="17.6" rx="0.6" fill="#ececec"/><rect x="12.6" y="2" width="9.4" height="7.6" rx="0.6" fill="#3ec1ef"/><rect x="12.6" y="11.2" width="9.4" height="3.4" rx="0.6" fill="#2a9be6"/><rect x="12.6" y="16.2" width="9.4" height="3.4" rx="0.6" fill="#1b76d0"/></svg>
<!-- to do -->
<svg style="left:627px;top:726px" width="31" height="28" viewBox="0 0 31 28"><path d="M1 17.5L5.2 13.3L13.6 21.7L9.4 25.9z" fill="#2462c6"/><path d="M9.4 25.9L5.2 21.7L24 3l4.2 4.2z" fill="#3f95e8"/><circle cx="22" cy="8.8" r="8" fill="#6b70b6"/></svg>
<div class="t c" style="left:641px;top:727px;width:16px;color:#fff;font-weight:bold;font-size:11px;transform:scaleX(0.9796);transform-origin:center center">1</div>
<!-- edge canary -->
<svg style="left:672px;top:732px" width="25" height="24" viewBox="0 0 25 24"><ellipse cx="12" cy="11.300" rx="12" ry="11.300" fill="url(#gedge)"/><path d="M0 11.300a12 11.300 0 0 0 15 11c-5.400-0.400-9-4-9-8.600c0-2.600 1.800-4.600 4.400-4.600c-3-2-8-1-10.400 2.200z" fill="#1457b8"/><circle cx="12" cy="11.400" r="2.400" fill="#e8f2fb"/><rect x="6.6" y="16.4" width="17.6" height="7.4" rx="1" fill="#f6c51c"/></svg>
<div class="t c" style="left:678px;top:744px;width:18px;color:#1a1400;font-weight:bold;font-size:7px;letter-spacing:0;transform:scaleX(0.9228);transform-origin:center center">CAN</div>
<!-- chrome canary -->
<svg style="left:716px;top:732px" width="24" height="24" viewBox="0 0 24 24"><circle cx="12" cy="12" r="12" fill="#f3b005"/><path d="M12 12L22.4 6A12 12 0 0 1 18 22.4z" fill="#fbd45a"/><circle cx="12" cy="12" r="5.700" fill="#fef3d2"/><circle cx="12" cy="12" r="3.700" fill="#f7bf1e"/></svg>
<div class="a" style="left:725px;top:760px;width:6px;height:2px;border-radius:1px;background:#7c7f88"></div>
<!-- firefox -->
<svg style="left:760px;top:732px" width="24" height="24" viewBox="0 0 24 24"><circle cx="12" cy="12.400" r="11.200" fill="url(#gff)"/><path d="M13 0.200c5 1 9.600 5.400 10 11.600c-1.400-3.400-3.400-5-6-5.600c0.200-2.400-1.400-4.600-4-6z" fill="#ffe63c"/><circle cx="11.800" cy="12.200" r="5.400" fill="#7a3fe0"/><path d="M5.600 9.600c2-2.800 5.600-3.400 8.800-1.600c-2.200 0-3.400 1-3.400 2.600s1.600 2.600 3.400 2.200c-2.200 2.200-6.600 1.600-8.800-3.200z" fill="#ff8a1e"/><path d="M2 7c1.200-2.600 3.400-4 5-4.400c-0.600 1-0.600 2 0 3c-2 0-3.600 0.400-5 1.400z" fill="#ffb32a"/></svg>
<!-- opera -->
<svg style="left:804px;top:732px" width="24" height="23" viewBox="0 0 24 23"><ellipse cx="11.6" cy="11.4" rx="11.4" ry="11.4" fill="#df1329"/><ellipse cx="11.6" cy="11.4" rx="5" ry="8.4" fill="#e6ebf6"/></svg>
<!-- defender -->
<svg style="left:848px;top:732px" width="23" height="23" viewBox="0 0 23 23"><path d="M11.500 0C8 2 4 2.600 0 2.600V10C0.600 16 5 20 11.500 23C18 20 22.400 16 23 10V2.600C19 2.600 15 2 11.500 0z" fill="#1a7fd0"/><path d="M11.500 0C8 2 4 2.600 0 2.600V10h11.500z" fill="#2aa5ea"/><path d="M11.500 0C15 2 19 2.600 23 2.600V10H11.500z" fill="#1b86d6"/><path d="M0 10h11.500v13C5 20 0.600 16 0 10z" fill="#1675c8"/><path d="M23 10H11.500v13C18 20 22.400 16 23 10z" fill="#0f5dae"/></svg>
<div class="a" style="left:857px;top:760px;width:6px;height:2px;border-radius:1px;background:#7c7f88"></div>
<!-- explorer (active) -->
<div class="a" style="left:884px;top:725px;width:39px;height:38px;border-radius:4px;background:#eaeffb;border:1px solid #eef2fc"></div>
<svg style="left:891px;top:733px" width="25" height="22" viewBox="0 0 25 22"><path d="M0 1.200a1.200 1.200 0 0 1 1.200-1.200h5.400l2 2.400H0z" fill="#d9a21c"/><rect x="0" y="2.400" width="24.600" height="18.800" rx="1.200" fill="url(#gfold)"/><path d="M4.400 21.200v-5a1.600 1.600 0 0 1 1.600-1.600h12.600a1.600 1.600 0 0 1 1.600 1.600v5z" fill="#1a78d2"/><rect x="6.600" y="17" width="11.400" height="4.200" fill="#1561b4"/></svg>
<div class="a" style="left:896px;top:760px;width:16px;height:3px;border-radius:1.500px;background:#5868c2"></div>

<!-- tray -->
<svg style="left:1050px;top:740px" width="13" height="8" viewBox="0 0 13 8"><path d="M0.800 7L6.300 1.400L11.800 7" fill="none" stroke="#1c1c28" stroke-width="1.500"/></svg>
<svg style="left:1071px;top:737px" width="18" height="13" viewBox="1071 737 18 13"><path d="M1073.200 737.800v3M1075.700 737.800v3" stroke="#1a1a1a" stroke-width="1.100"/><path d="M1071.800 740.600h5.300v1.800a2.650 2.400 0 0 1-5.300 0z" fill="#1a1a1a"/><path d="M1074.450 744v3.400h2.600" fill="none" stroke="#1a1a1a" stroke-width="1.100"/><rect x="1077" y="740.900" width="10" height="7.600" rx="1" fill="none" stroke="#1a1a1a" stroke-width="1.200"/><rect x="1078.600" y="742.500" width="6.800" height="4.400" fill="#1a1a1a"/><rect x="1087.400" y="743.200" width="1.100" height="3" fill="#1a1a1a"/></svg>
<svg style="left:1096px;top:738px" width="17" height="14" viewBox="0 0 17 14"><path d="M3.600 10.600a3.200 3.200 0 0 1-0.400-6.300A4.200 4.200 0 0 1 11 3.400a3 3 0 0 1 1.400 5.600" fill="#b8b8b8" stroke="#2a2a2a" stroke-width="1.100"/><path d="M3.600 10.600h5" stroke="#2a2a2a" stroke-width="1.100"/><circle cx="11.600" cy="9.200" r="4.600" fill="#e0383e"/><path d="M9.800 7.400l3.600 3.600M13.400 7.400l-3.600 3.600" stroke="#fff" stroke-width="1.200"/></svg>
<svg style="left:1122px;top:738px" width="14" height="13" viewBox="0 0 14 13"><circle cx="11.400" cy="11.200" r="1.300" fill="#1a1a1a"/><path d="M7.600 11.600A4 4 0 0 1 11.800 7.400" fill="none" stroke="#1a1a1a" stroke-width="1.400"/><path d="M4.400 11.600A7.200 7.200 0 0 1 11.800 4.200" fill="none" stroke="#1a1a1a" stroke-width="1.400"/><path d="M1.200 11.600A10.400 10.400 0 0 1 11.800 1" fill="none" stroke="#1a1a1a" stroke-width="1.400"/></svg>
<svg style="left:1148px;top:736px" width="17" height="16" viewBox="0 0 17 16"><path d="M5.600 14.800L11.600 2.200a1.400 1.400 0 0 1 2.600 1.200L8.400 15.400L5 16z" fill="none" stroke="#1a1a1a" stroke-width="1.200"/><path d="M4.600 10.400a2.600 2.600 0 1 0 1 4.600" fill="none" stroke="#1a1a1a" stroke-width="1.200"/><path d="M12.400 6.400c2.400-0.400 3.600 1 3 2.400s-2 1.800-3.400 1.600" fill="none" stroke="#1a1a1a" stroke-width="1.200"/></svg>
<svg style="left:1176px;top:737px" width="23" height="13" viewBox="0 0 23 13"><rect x="0.600" y="0.600" width="21.800" height="11.800" rx="1" fill="none" stroke="#1a1a1a" stroke-width="1.200"/><path d="M3 3.600h17M3 6.400h17" stroke="#1a1a1a" stroke-width="1.100" stroke-dasharray="1.400 1.200"/><path d="M5.600 9.400h12" stroke="#1a1a1a" stroke-width="1.100"/><path d="M3 9.400h1.400M19 9.400h1.400" stroke="#1a1a1a" stroke-width="1.100"/></svg>
<div class="t" style="left:1210px;top:736px;transform:scaleX(0.8638);transform-origin:left center">ENG</div>
<div class="t c" style="left:1236px;top:720px;width:80px;transform:scaleX(0.9597);transform-origin:center center">6:26 PM</div>
<div class="t c" style="left:1236px;top:736px;width:80px;transform:scaleX(0.9493);transform-origin:center center">Friday</div>
<div class="t c" style="left:1236px;top:752px;width:80px;transform:scaleX(0.9692);transform-origin:center center">10/28/2022</div>
<svg style="left:1325px;top:736px" width="17" height="16" viewBox="1325 736 17 16"><path d="M1325 736.200h16v12.700h-8.200l-3.200 2.600v-2.600H1325z" fill="#111"/><path d="M1327.500 739.600h11M1327.500 742.600h11M1327.500 745.500h6" stroke="#e9eff9" stroke-width="1.100"/></svg>
<div class="a" style="left:1332px;top:743px;width:17px;height:17px;border-radius:9px;background:#d3d4d6;border:1px solid #85888e"></div>
<div class="a" style="left:1361px;top:721px;width:1px;height:47px;background:#b7c2d3"></div>
<div class="t c" style="left:1332px;top:743px;width:17px;font-size:12px;color:#000;transform:scaleX(0.9720);transform-origin:center center">4</div>

</div>
</body>
</html>
